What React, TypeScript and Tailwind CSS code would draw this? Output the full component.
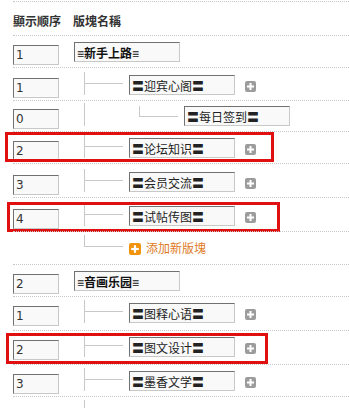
import React from 'react';

type Mark = { l: number; t: number; w: number; h: number };

interface RowAttributes {
  kind: 'cat' | 'forum' | 'sub' | 'add' | 'trunk';
  order?: string;
  name?: string;
  h: number;
  t: number;
  mark?: Mark;
}

const rows: RowAttributes[] = [
  { kind: 'cat', order: '1', name: '新手上路', h: 32, t: 7 },
  { kind: 'forum', order: '1', name: '迎宾心阁', h: 33, t: 8 },
  { kind: 'sub', order: '0', name: '每日签到', h: 31, t: 6 },
  { kind: 'forum', order: '2', name: '论坛知识', h: 32, t: 7, mark: { l: -8, t: 0, w: 269, h: 30 } },
  { kind: 'forum', order: '3', name: '会员交流', h: 34, t: 9 },
  { kind: 'forum', order: '4', name: '试帖传图', h: 34, t: 9, mark: { l: -6, t: 4, w: 273, h: 30 } },
  { kind: 'add', h: 33, t: 7 },
  { kind: 'cat', order: '2', name: '音画乐园', h: 32, t: 7 },
  { kind: 'forum', order: '1', name: '图释心语', h: 34, t: 7 },
  { kind: 'forum', order: '2', name: '图文设计', h: 34, t: 7, mark: { l: -7, t: 2, w: 262, h: 31 } },
  { kind: 'forum', order: '3', name: '墨香文学', h: 32, t: 7 },
  { kind: 'trunk', h: 33, t: 7 },
];

const boxCls =
  'h-[20px] border border-t-[#707070] border-l-[#707070] border-r-[#c8c8c8] border-b-[#c8c8c8] bg-[#f9f9f9] px-[2px] outline-none';

const PlusIcon = ({ color, size }: { color: string; size: number }) => (
  <svg width={size} height={size} viewBox="0 0 11 11" className="shrink-0">
    <rect x="0" y="0" width="11" height="11" rx="2" fill={color} />
    <rect x="2" y="4.5" width="7" height="2" fill="#fff" />
    <rect x="4.5" y="2" width="2" height="7" fill="#fff" />
  </svg>
);

// tree connector: vertical trunk + branch
const Branch = ({ last }: { last?: boolean }) => (
  <svg width="45" height="23" className="-mt-[3px] shrink-0">
    <line x1="0.5" y1="0" x2="0.5" y2={last ? 12 : 23} stroke="#c8c8c8" />
    <line x1="0" y1="11.5" x2="39" y2="11.5" stroke="#c8c8c8" />
  </svg>
);

const SubBranch = () => (
  <svg width="100" height="23" className="-mt-[3px] shrink-0">
    <line x1="0.5" y1="0" x2="0.5" y2="23" stroke="#c8c8c8" />
    <line x1="55.5" y1="3" x2="55.5" y2="14" stroke="#c8c8c8" />
    <line x1="55" y1="13.5" x2="94" y2="13.5" stroke="#c8c8c8" />
  </svg>
);

const Row = ({ row }: { row: RowAttributes }) => {
  const { kind, order, name, h, t, mark } = row;

  return (
    <div
      className="relative flex flex-row border-t border-dotted border-[#c8c8c8]"
      style={{ height: h, paddingTop: t - 1 }}
    >
      <div className="w-[61px] shrink-0">
        {kind !== 'add' && kind !== 'trunk' && (
          <input
            readOnly
            value={order}
            className={`${boxCls} w-[46px] text-[12px] text-[#333] font-['DejaVu_Sans',sans-serif]`}
          />
        )}
      </div>

      {kind === 'cat' && (
        <input
          readOnly
          value={`≡${name}≡`}
          className={`${boxCls} w-[106px] text-[12px] font-bold text-[#111]`}
        />
      )}

      {kind === 'forum' && (
        <div className="flex flex-row pl-[10px]">
          <Branch />
          <input
            readOnly
            value={`〓${name}〓`}
            className={`${boxCls} w-[106px] text-[12px] text-[#222]`}
          />
          <div className="ml-[10px] mt-[6px]">
            <PlusIcon color="#9c9c9c" size={11} />
          </div>
        </div>
      )}

      {kind === 'sub' && (
        <div className="flex flex-row pl-[10px]">
          <SubBranch />
          <input
            readOnly
            value={`〓${name}〓`}
            className={`${boxCls} w-[106px] text-[12px] text-[#222]`}
          />
        </div>
      )}

      {kind === 'add' && (
        <div className="flex flex-row pl-[10px]">
          <Branch last />
          <div className="mt-[5px] flex flex-row items-center h-[12px]">
            <PlusIcon color="#f2930c" size={12} />
            <span className="ml-[5px] text-[12px] leading-[12px] text-[#e07a1e]">添加新版塊</span>
          </div>
        </div>
      )}

      {kind === 'trunk' && (
        <div className="flex flex-row pl-[10px]">
          <Branch last />
        </div>
      )}

      {mark && (
        <div
          className="absolute border-[3px] border-[#e01010] pointer-events-none"
          style={{ left: mark.l, top: mark.t, width: mark.w, height: mark.h }}
        />
      )}
    </div>
  );
};

export default function App() {
  return (
    <div className="w-[349px] h-[408px] overflow-hidden bg-white pl-[13px] pt-[1px] font-['Liberation_Sans','Noto_Sans_CJK_SC',sans-serif]">
      <div className="flex flex-row h-[34px] border-t border-dotted border-[#c8c8c8] pt-[14px] text-[12px] leading-[12px] font-bold text-[#333]">
        <div className="w-[60px]">顯示顺序</div>
        <div>版塊名稱</div>
      </div>
      {rows.map((row, i) => (
        <Row key={i} row={row} />
      ))}
    </div>
  );
}
